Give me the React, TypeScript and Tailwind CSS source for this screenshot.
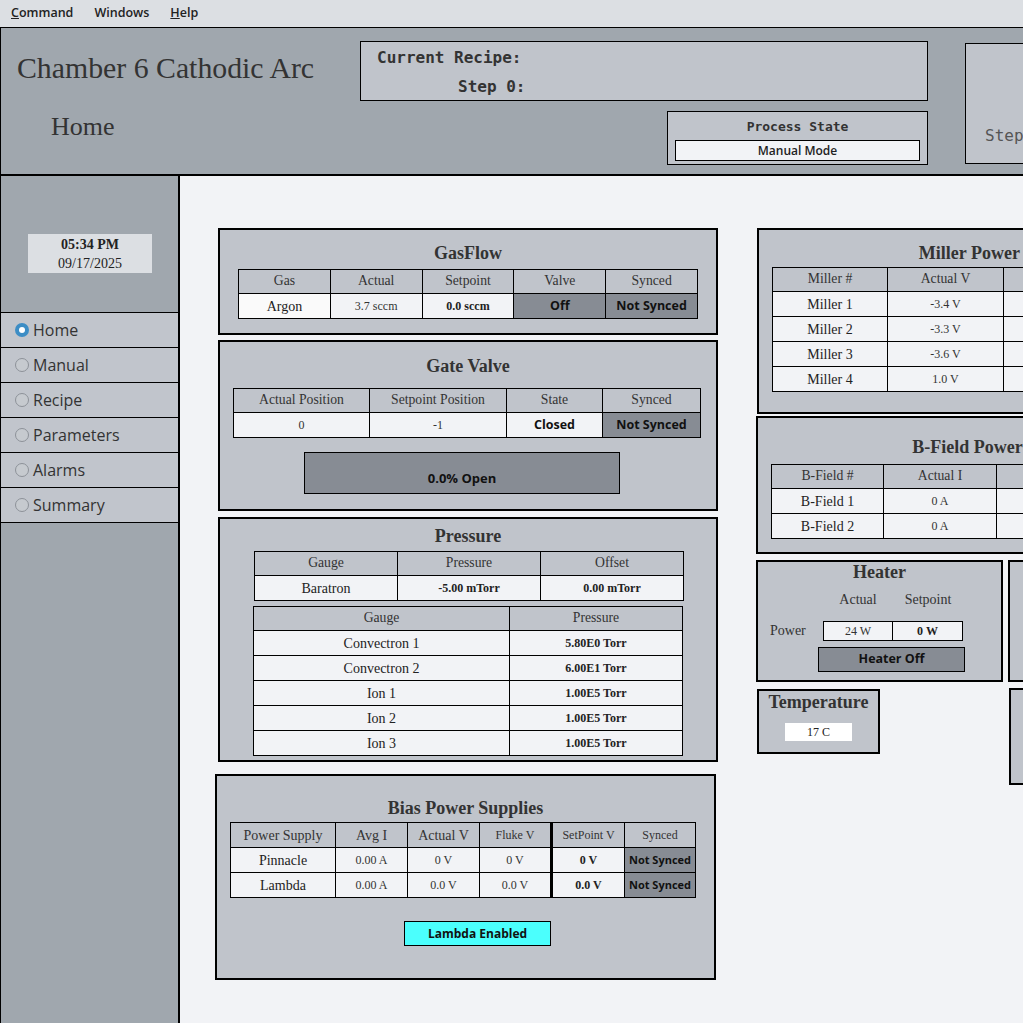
import React from "react";

const serif = "font-['Liberation_Serif',serif]";
const th = "border border-black text-center font-normal text-[13.7px] text-[#333] font-['Liberation_Serif',serif] h-[24px] p-0";
const tdName = "border border-black text-center text-[14px] text-[#222] font-['Liberation_Serif',serif] bg-[#f2f3f6] h-[25px] p-0";
const tdVal = "border border-black text-center text-[12px] text-[#333] font-['Liberation_Serif',serif] bg-[#f2f3f6] h-[25px] p-0";
const tdBold = "border border-black text-center text-[12px] font-bold text-[#222] font-['Liberation_Serif',serif] bg-[#f2f3f6] h-[25px] p-0";
const tdDark = "border border-black text-center text-[12.5px] font-bold text-[#111] font-['Open_Sans',sans-serif] bg-[#878c94] h-[25px] p-0";
const tdSans = "border border-black text-center text-[12.5px] font-bold text-[#111] font-['Open_Sans',sans-serif] bg-[#f2f3f6] h-[25px] p-0";
const panel = "border-2 border-black bg-[#c0c4cb] box-border shrink-0";
const title = "text-center text-[18px] leading-[22px] font-bold text-[#333] font-['Liberation_Serif',serif]";

function Radio({ on }: { on?: boolean }) {
  return on ? (
    <span className="w-[14px] h-[14px] rounded-full bg-[#3c8dc5] flex items-center justify-center shrink-0">
      <span className="w-[6px] h-[6px] rounded-full bg-white" />
    </span>
  ) : (
    <span className="w-[14px] h-[14px] rounded-full bg-[#c6cacf] border border-[#8d9299] shrink-0" />
  );
}

const navItems = ["Home", "Manual", "Recipe", "Parameters", "Alarms", "Summary"];

export default function App() {
  return (
    <div className="w-[1023px] h-[1023px] overflow-hidden bg-[#f2f3f6] flex flex-col">
      {/* Menu bar */}
      <div className="h-[28px] shrink-0 bg-[#dcdfe3] border-b border-black flex items-center pl-[11px] gap-[21px] font-['Open_Sans',sans-serif] text-[12.5px] font-semibold text-[#222]">
        <span><span className="underline">C</span>ommand</span>
        <span>Windows</span>
        <span><span className="underline">H</span>elp</span>
      </div>

      {/* Header */}
      <div className="h-[148px] shrink-0 w-[1300px] bg-[#a0a7ae] border-l border-black border-b-2 box-border flex">
        <div className="w-[359px] shrink-0 flex flex-col">
          <div className={`${serif} text-[29.8px] leading-[34px] text-[#333] pl-[16px] pt-[23px]`}>Chamber 6 Cathodic Arc</div>
          <div className={`${serif} text-[26px] leading-[30px] text-[#333] pl-[50px] mt-[27px]`}>Home</div>
        </div>
        <div className="w-[568px] shrink-0 flex flex-col items-end">
          <div className="mt-[13px] w-[568px] h-[60px] border border-black bg-[#c0c4cb] box-border font-['DejaVu_Sans_Mono',monospace] font-bold text-[16px] text-[#333] leading-[29px] pt-[1px]">
            <div className="pl-[16px]">Current Recipe:</div>
            <div className="pl-[97px]">Step 0:</div>
          </div>
          <div className="mt-[10px] w-[261px] h-[54px] border border-black bg-[#c0c4cb] box-border flex flex-col items-center pt-[6px]">
            <div className="font-['DejaVu_Sans_Mono',monospace] font-bold text-[13px] leading-[18px] text-[#333]">Process State</div>
            <div className="mt-[4px] w-[245px] h-[21px] border border-black bg-[#f2f3f6] box-border flex items-center justify-center font-['Open_Sans',sans-serif] font-semibold text-[12px] text-[#222]">Manual Mode</div>
          </div>
        </div>
        <div className="ml-[37px] mt-[15px] w-[220px] h-[121px] border border-black bg-[#c0c4cb] box-border flex flex-col justify-end pb-[17px] pl-[19px]">
          <div className="font-['DejaVu_Sans_Mono',monospace] text-[16px] leading-[20px] text-[#555]">Step Time:</div>
        </div>
      </div>

      {/* Body */}
      <div className="flex flex-1 min-h-0">
        {/* Sidebar */}
        <div className="w-[180px] shrink-0 bg-[#a0a7ae] border-l border-r-2 border-black box-border flex flex-col">
          <div className={`mt-[58px] ml-[27px] w-[124px] h-[39px] bg-[#dcdfe3] flex flex-col items-center justify-center ${serif} text-[14px] leading-[19px] text-[#222]`}>
            <div className="font-bold">05:34 PM</div>
            <div>09/17/2025</div>
          </div>
          <div className="mt-[39px] flex flex-col border-b border-black">
            {navItems.map((n, i) => (
              <div key={n} className="h-[35px] border-t border-black bg-[#c1c5cc] flex items-center pl-[14px] gap-[4px] font-['Open_Sans',sans-serif] text-[16px] text-[#333]">
                <Radio on={i === 0} />
                <span>{n}</span>
              </div>
            ))}
          </div>
        </div>

        {/* Main */}
        <div className="flex pt-[52px] pl-[38px] min-w-0">
          {/* Left column */}
          <div className="w-[500px] shrink-0 flex flex-col">
            {/* GasFlow */}
            <div className={`${panel} w-[500px] h-[107px] pt-[12px]`}>
              <div className={`${title} mb-[5px]`}>GasFlow</div>
              <table className="mx-auto w-[460px] table-fixed border-collapse">
                <tbody>
                  <tr>
                    <td className={th}>Gas</td>
                    <td className={th}>Actual</td>
                    <td className={th}>Setpoint</td>
                    <td className={th}>Valve</td>
                    <td className={th}>Synced</td>
                  </tr>
                  <tr>
                    <td className="border border-black text-center text-[14px] text-[#222] font-['Liberation_Serif',serif] bg-[#fafafa] h-[25px] p-0">Argon</td>
                    <td className={tdVal}>3.7 sccm</td>
                    <td className={tdBold}>0.0 sccm</td>
                    <td className={tdDark}>Off</td>
                    <td className={tdDark}>Not Synced</td>
                  </tr>
                </tbody>
              </table>
            </div>

            {/* Gate Valve */}
            <div className={`${panel} w-[500px] h-[171px] mt-[5px] pt-[13px]`}>
              <div className={`${title} mb-[11px]`}>Gate Valve</div>
              <table className="ml-[13px] w-[467px] table-fixed border-collapse">
                <colgroup>
                  <col className="w-[136px]" />
                  <col className="w-[137px]" />
                  <col className="w-[96px]" />
                  <col className="w-[98px]" />
                </colgroup>
                <tbody>
                  <tr>
                    <td className={th}>Actual Position</td>
                    <td className={th}>Setpoint Position</td>
                    <td className={th}>State</td>
                    <td className={th}>Synced</td>
                  </tr>
                  <tr>
                    <td className={tdVal}>0</td>
                    <td className={tdVal}>-1</td>
                    <td className={tdSans}>Closed</td>
                    <td className={tdDark}>Not Synced</td>
                  </tr>
                </tbody>
              </table>
              <div className="ml-[84px] mt-[14px] w-[316px] h-[42px] border border-black bg-[#878c94] box-border flex items-end justify-center pb-[5px] font-['Open_Sans',sans-serif] font-bold text-[13px] text-[#111]">0.0% Open</div>
            </div>

            {/* Pressure */}
            <div className={`${panel} w-[500px] h-[245px] mt-[6px] pt-[6px]`}>
              <div className={`${title} mb-[4px]`}>Pressure</div>
              <table className="ml-[34px] w-[430px] table-fixed border-collapse">
                <tbody>
                  <tr>
                    <td className={th}>Gauge</td>
                    <td className={th}>Pressure</td>
                    <td className={th}>Offset</td>
                  </tr>
                  <tr>
                    <td className={tdName}>Baratron</td>
                    <td className={tdBold}>-5.00 mTorr</td>
                    <td className={tdBold}>0.00 mTorr</td>
                  </tr>
                </tbody>
              </table>
              <table className="ml-[33px] mt-[5px] w-[429px] table-fixed border-collapse">
                <colgroup>
                  <col className="w-[256px]" />
                  <col className="w-[173px]" />
                </colgroup>
                <tbody>
                  <tr>
                    <td className={th}>Gauge</td>
                    <td className={th}>Pressure</td>
                  </tr>
                  {[
                    ["Convectron 1", "5.80E0 Torr"],
                    ["Convectron 2", "6.00E1 Torr"],
                    ["Ion 1", "1.00E5 Torr"],
                    ["Ion 2", "1.00E5 Torr"],
                    ["Ion 3", "1.00E5 Torr"],
                  ].map(([g, p]) => (
                    <tr key={g}>
                      <td className={tdName}>{g}</td>
                      <td className={tdBold}>{p}</td>
                    </tr>
                  ))}
                </tbody>
              </table>
            </div>

            {/* Bias Power Supplies */}
            <div className={`${panel} w-[501px] h-[206px] mt-[12px] ml-[-3px] pt-[21px]`}>
              <div className={`${title} mb-[3px]`}>Bias Power Supplies</div>
              <table className="ml-[13px] w-[465px] table-fixed border-collapse">
                <colgroup>
                  <col className="w-[105px]" />
                  <col className="w-[72px]" />
                  <col className="w-[72px]" />
                  <col className="w-[72px]" />
                  <col className="w-[73px]" />
                  <col className="w-[71px]" />
                </colgroup>
                <tbody>
                  <tr>
                    <td className="border border-black text-center text-[14px] text-[#333] font-['Liberation_Serif',serif] h-[25px] p-0">Power Supply</td>
                    <td className="border border-black text-center text-[14px] text-[#333] font-['Liberation_Serif',serif] h-[25px] p-0">Avg I</td>
                    <td className="border border-black text-center text-[14px] text-[#333] font-['Liberation_Serif',serif] h-[25px] p-0">Actual V</td>
                    <td className="border border-black text-center text-[12px] text-[#333] font-['Liberation_Serif',serif] h-[25px] p-0">Fluke V</td>
                    <td className="border border-black border-l-[3px] border-l-black text-center text-[12px] text-[#333] font-['Liberation_Serif',serif] h-[25px] p-0">SetPoint V</td>
                    <td className="border border-black text-center text-[12px] text-[#333] font-['Liberation_Serif',serif] h-[25px] p-0">Synced</td>
                  </tr>
                  <tr>
                    <td className={tdName}>Pinnacle</td>
                    <td className={tdVal}>0.00 A</td>
                    <td className={tdVal}>0 V</td>
                    <td className={tdVal}>0 V</td>
                    <td className="border border-black border-l-[3px] border-l-black text-center text-[12px] font-bold text-[#222] font-['Liberation_Serif',serif] bg-[#f2f3f6] h-[25px] p-0">0 V</td>
                    <td className="border border-black text-center text-[11px] font-bold text-[#111] font-['Open_Sans',sans-serif] bg-[#878c94] h-[24px] p-0">Not Synced</td>
                  </tr>
                  <tr>
                    <td className={tdName}>Lambda</td>
                    <td className={tdVal}>0.00 A</td>
                    <td className={tdVal}>0.0 V</td>
                    <td className={tdVal}>0.0 V</td>
                    <td className="border border-black border-l-[3px] border-l-black text-center text-[12px] font-bold text-[#222] font-['Liberation_Serif',serif] bg-[#f2f3f6] h-[25px] p-0">0.0 V</td>
                    <td className="border border-black text-center text-[11px] font-bold text-[#111] font-['Open_Sans',sans-serif] bg-[#878c94] h-[24px] p-0">Not Synced</td>
                  </tr>
                </tbody>
              </table>
              <div className="ml-[187px] mt-[23px] w-[147px] h-[25px] border border-black bg-[#4bfffd] box-border flex items-center justify-center font-['Open_Sans',sans-serif] font-bold text-[12px] text-[#111]">Lambda Enabled</div>
            </div>
          </div>

          {/* Right column */}
          <div className="ml-[39px] w-[520px] shrink-0 flex flex-col">
            {/* Miller */}
            <div className={`${panel} w-[494px] h-[186px] pt-[12px]`}>
              <div className={`${title} mb-[3px]`}>Miller Power Supplies</div>
              <table className="ml-[13px] w-[464px] table-fixed border-collapse">
                <colgroup>
                  <col className="w-[115px]" />
                  <col className="w-[116px]" />
                  <col className="w-[116px]" />
                  <col className="w-[117px]" />
                </colgroup>
                <tbody>
                  <tr>
                    <td className={th}>Miller #</td>
                    <td className={th}>Actual V</td>
                    <td className={th}>Setpoint V</td>
                    <td className={th}>Synced</td>
                  </tr>
                  {[
                    ["Miller 1", "-3.4 V"],
                    ["Miller 2", "-3.3 V"],
                    ["Miller 3", "-3.6 V"],
                    ["Miller 4", "1.0 V"],
                  ].map(([m, v]) => (
                    <tr key={m}>
                      <td className={tdName}>{m}</td>
                      <td className={tdVal}>{v}</td>
                      <td className={tdBold}>0.0 V</td>
                      <td className={tdDark}>Not Synced</td>
                    </tr>
                  ))}
                </tbody>
              </table>
            </div>

            {/* B-Field */}
            <div className={`${panel} w-[492px] h-[138px] mt-[2px] ml-[-1px] pt-[18px]`}>
              <div className={`${title} mb-[6px]`}>B-Field Power Supplies</div>
              <table className="ml-[13px] w-[452px] table-fixed border-collapse">
                <colgroup>
                  <col className="w-[112px]" />
                  <col className="w-[113px]" />
                  <col className="w-[113px]" />
                  <col className="w-[114px]" />
                </colgroup>
                <tbody>
                  <tr>
                    <td className={th}>B-Field #</td>
                    <td className={th}>Actual I</td>
                    <td className={th}>Setpoint I</td>
                    <td className={th}>Synced</td>
                  </tr>
                  {["B-Field 1", "B-Field 2"].map((b) => (
                    <tr key={b}>
                      <td className={tdName}>{b}</td>
                      <td className={tdVal}>0 A</td>
                      <td className={tdBold}>0 A</td>
                      <td className={tdDark}>Not Synced</td>
                    </tr>
                  ))}
                </tbody>
              </table>
            </div>

            {/* Heater row */}
            <div className="flex mt-[6px] ml-[-1px] gap-[5px]">
              <div className={`${panel} w-[247px] h-[122px]`}>
                <div className="text-center text-[18px] leading-[20px] font-bold text-[#333] font-['Liberation_Serif',serif]">Heater</div>
                <div className={`flex ml-[65px] mt-[8px] ${serif} text-[14px] leading-[20px] text-[#333]`}>
                  <div className="w-[70px] text-center">Actual</div>
                  <div className="w-[70px] text-center">Setpoint</div>
                </div>
                <div className="flex items-center mt-[10px]">
                  <div className={`w-[65px] pl-[12px] ${serif} text-[14px] text-[#333]`}>Power</div>
                  <div className="flex h-[20px] border border-black box-border bg-[#f2f3f6]">
                    <div className={`w-[69px] border-r border-black flex items-center justify-center ${serif} text-[12px] text-[#333]`}>24 W</div>
                    <div className={`w-[69px] flex items-center justify-center ${serif} text-[12px] font-bold text-[#222]`}>0 W</div>
                  </div>
                </div>
                <div className="ml-[60px] mt-[6px] w-[147px] h-[25px] border border-black bg-[#878c94] box-border flex items-center justify-center font-['Open_Sans',sans-serif] font-bold text-[12.5px] text-[#111]">Heater Off</div>
              </div>
              <div className={`${panel} w-[240px] h-[122px]`} />
            </div>

            {/* Temperature row */}
            <div className="flex ml-[-1px] gap-[129px]">
              <div className={`${panel} w-[123px] h-[65px] mt-[7px] ml-[1px]`}>
                <div className="text-center text-[18px] leading-[22px] font-bold text-[#333] font-['Liberation_Serif',serif]">Temperature</div>
                <div className={`mx-auto mt-[10px] w-[67px] h-[18px] bg-white flex items-center justify-center ${serif} text-[12px] text-[#222]`}>17 C</div>
              </div>
              <div className={`${panel} w-[240px] h-[97px] mt-[6px]`} />
            </div>
          </div>
        </div>
      </div>
    </div>
  );
}
